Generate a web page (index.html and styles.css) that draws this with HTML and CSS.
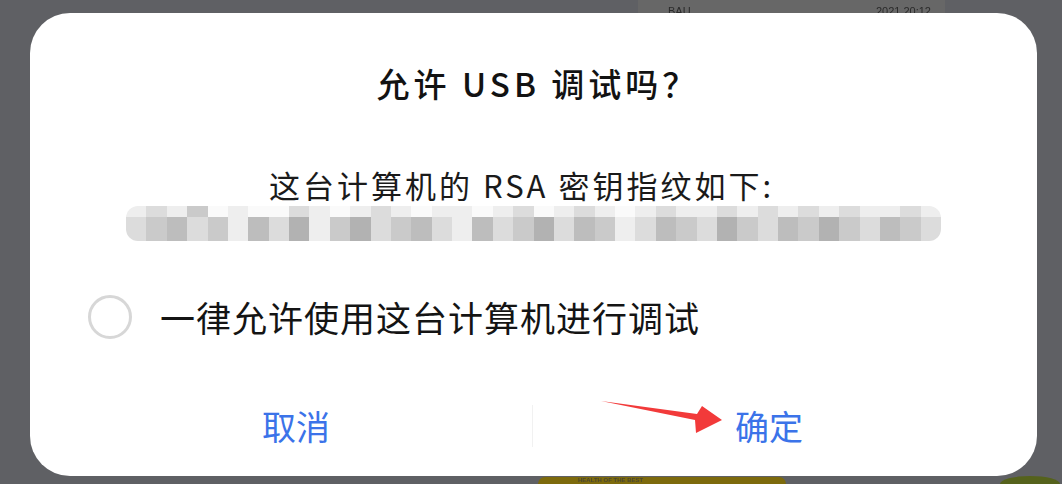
FILE: index.html
```html
<!DOCTYPE html>
<html lang="zh-CN">
<head>
<meta charset="utf-8">
<link rel="stylesheet" href="styles.css">
</head>
<body>
<div class="bg-panel"><span class="bg-text">BAU</span><span class="bg-text2">2021 20:12</span></div>
<div class="bg-pill">HEALTH OF THE BEST</div>
<div class="bg-dot"></div>

<div class="dialog">
  <div class="title">允许 USB 调试吗？</div>
  <div class="message">这台计算机的 RSA 密钥指纹如下:</div>
  <div class="fingerprint">
    <div class="fp-row top">
      <span class="c1"></span><span class="c2"></span><span class="c1"></span><span class="c3"></span><span class="c0"></span><span class="c1"></span><span class="c0"></span><span class="c0"></span><span class="c2"></span><span class="c1"></span><span class="c0"></span><span class="c1"></span><span class="c2"></span><span class="c1"></span><span class="c0"></span><span class="c1"></span><span class="c1"></span><span class="c0"></span><span class="c1"></span><span class="c2"></span><span class="c0"></span><span class="c1"></span><span class="c2"></span><span class="c1"></span><span class="c0"></span><span class="c1"></span><span class="c2"></span><span class="c1"></span><span class="c1"></span><span class="c2"></span><span class="c1"></span><span class="c2"></span><span class="c1"></span><span class="c2"></span><span class="c1"></span><span class="c2"></span><span class="c1"></span><span class="c1"></span><span class="c2"></span><span class="c1"></span>
    </div>
    <div class="fp-row bottom">
      <span class="c2"></span><span class="c3"></span><span class="c4"></span><span class="c2"></span><span class="c3"></span><span class="c1"></span><span class="c4"></span><span class="c2"></span><span class="c5"></span><span class="c1"></span><span class="c3"></span><span class="c5"></span><span class="c2"></span><span class="c3"></span><span class="c4"></span><span class="c2"></span><span class="c1"></span><span class="c4"></span><span class="c2"></span><span class="c3"></span><span class="c5"></span><span class="c2"></span><span class="c4"></span><span class="c3"></span><span class="c1"></span><span class="c2"></span><span class="c4"></span><span class="c3"></span><span class="c2"></span><span class="c5"></span><span class="c3"></span><span class="c2"></span><span class="c4"></span><span class="c3"></span><span class="c5"></span><span class="c3"></span><span class="c2"></span><span class="c4"></span><span class="c3"></span><span class="c2"></span>
    </div>
  </div>
  <div class="check-row">
    <span class="radio"></span>
    <span class="check-label">一律允许使用这台计算机进行调试</span>
  </div>
  <div class="buttons">
    <div class="btn">取消</div>
    <div class="divider"></div>
    <div class="btn">确定</div>
  </div>
  <svg class="arrow" width="140" height="50" viewBox="0 0 140 50">
    <polygon points="11,11 107,24 112,16 132,30 106,43 105,30" fill="#f23a3a"/>
  </svg>
</div>
</body>
</html>
```

FILE: styles.css
```css
* { box-sizing: border-box; }
html, body { margin: 0; overflow: hidden; }
body {
  width: 1062px;
  height: 484px;
  background: #5f6064;
  padding: 13px 0 0 30px;
  position: relative;
  font-family: "Noto Sans CJK SC", "Noto Sans", sans-serif;
}
.bg-panel {
  position: absolute;
  left: 638px;
  top: 0;
  width: 307px;
  height: 13px;
  background: #676767;
  color: #2a2a2a;
  font-size: 11px;
  line-height: 22px;
  font-family: "Liberation Sans", sans-serif;
  filter: blur(0.6px);
}
.bg-text { position: absolute; left: 30px; top: 0; }
.bg-text2 { position: absolute; right: 14px; top: 0; }
.bg-pill {
  position: absolute;
  left: 538px;
  top: 477px;
  width: 248px;
  height: 7px;
  overflow: hidden;
  border-radius: 8px 8px 0 0;
  background: #7d6a0c;
  color: #4a4630;
  font: bold 6px/7px "Liberation Sans", sans-serif;
  padding-left: 40px;
  filter: blur(0.4px);
}
.bg-dot {
  position: absolute;
  left: 1000px;
  top: 476px;
  width: 60px;
  height: 8px;
  border-radius: 30px 30px 0 0 / 8px 8px 0 0;
  background: #55621c;
}
.dialog {
  position: relative;
  z-index: 1;
  width: 1007px;
  height: 463px;
  background: #fff;
  border-radius: 40px;
  display: flex;
  flex-direction: column;
  align-items: center;
}
.title {
  margin-top: 50px;
  margin-left: 9px;
  height: 40px;
  line-height: 40px;
  font-size: 33px;
  letter-spacing: 4px;
  color: #121212;
  font-weight: 500;
}
.message {
  margin-top: 62px;
  margin-right: 24px;
  height: 40px;
  line-height: 40px;
  font-size: 31px;
  letter-spacing: 3px;
  color: #1a1a1a;
}
.fingerprint {
  margin-top: 1px;
  width: 815px;
  height: 35px;
  display: flex;
  flex-direction: column;
  border-radius: 12px;
  overflow: hidden;
  filter: blur(0.4px);
}
.fp-row { display: flex; }
.fp-row.top { height: 11px; }
.fp-row.bottom { height: 24px; }
.fp-row span { flex: 1; }
.c0 { background: #fafafa; }
.c1 { background: #eeeeee; }
.c2 { background: #dcdcdc; }
.c3 { background: #cacaca; }
.c4 { background: #bdbdbd; }
.c5 { background: #b2b2b2; }
.check-row {
  margin-top: 54px;
  align-self: stretch;
  padding-left: 58px;
  height: 44px;
  display: flex;
  align-items: center;
}
.radio {
  width: 44px;
  height: 44px;
  border-radius: 50%;
  border: 3px solid #d7d7d7;
  flex: none;
}
.check-label {
  margin-left: 28px;
  font-size: 35px;
  letter-spacing: 1px;
  color: #141414;
  line-height: 44px;
}
.buttons {
  margin-top: 57px;
  align-self: stretch;
  padding: 0 32px 0 30px;
  height: 60px;
  display: flex;
  align-items: center;
}
.btn {
  flex: 1;
  text-align: center;
  font-size: 34px;
  color: #3b73e9;
  line-height: 60px;
}
.divider {
  width: 1px;
  height: 42px;
  background: #f1f1f1;
}
.arrow {
  position: absolute;
  left: 560px;
  top: 377px;
}
```
